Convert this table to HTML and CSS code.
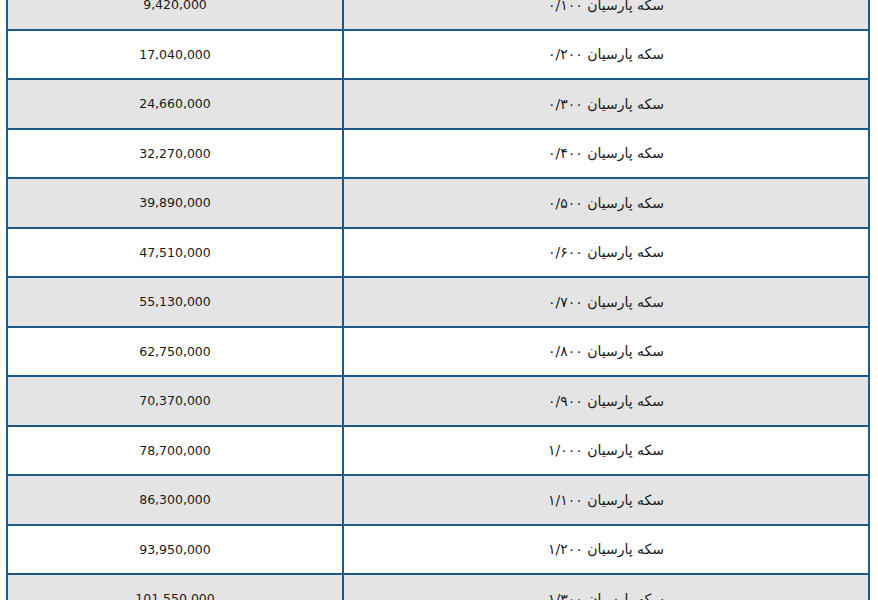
FILE: index.html
```html
<!DOCTYPE html>
<html lang="fa">
<head>
<meta charset="utf-8">
<link rel="stylesheet" href="styles.css">
</head>
<body>
<div class="wrap">
<table class="prices" dir="rtl">
<tbody>
<tr class="odd"><td class="name">سکه پارسیان ۰/۱۰۰</td><td class="price">9,420,000</td></tr>
<tr><td class="name">سکه پارسیان ۰/۲۰۰</td><td class="price">17,040,000</td></tr>
<tr class="odd"><td class="name">سکه پارسیان ۰/۳۰۰</td><td class="price">24,660,000</td></tr>
<tr><td class="name">سکه پارسیان ۰/۴۰۰</td><td class="price">32,270,000</td></tr>
<tr class="odd"><td class="name">سکه پارسیان ۰/۵۰۰</td><td class="price">39,890,000</td></tr>
<tr><td class="name">سکه پارسیان ۰/۶۰۰</td><td class="price">47,510,000</td></tr>
<tr class="odd"><td class="name">سکه پارسیان ۰/۷۰۰</td><td class="price">55,130,000</td></tr>
<tr><td class="name">سکه پارسیان ۰/۸۰۰</td><td class="price">62,750,000</td></tr>
<tr class="odd"><td class="name">سکه پارسیان ۰/۹۰۰</td><td class="price">70,370,000</td></tr>
<tr><td class="name">سکه پارسیان ۱/۰۰۰</td><td class="price">78,700,000</td></tr>
<tr class="odd"><td class="name">سکه پارسیان ۱/۱۰۰</td><td class="price">86,300,000</td></tr>
<tr><td class="name">سکه پارسیان ۱/۲۰۰</td><td class="price">93,950,000</td></tr>
<tr class="odd"><td class="name">سکه پارسیان ۱/۳۰۰</td><td class="price">101,550,000</td></tr>
</tbody>
</table>
</div>
</body>
</html>
```

FILE: styles.css
```css
html, body {
  margin: 0;
  padding: 0;
  background: #ffffff;
  overflow: hidden;
}
.wrap {
  padding-left: 6px;
}
.prices {
  margin-top: -21px;
  border-collapse: collapse;
  width: 864px;
  border: 2px solid #1b5a8b;
  font-family: "DejaVu Sans", sans-serif;
  color: #1a1a1a;
  direction: rtl;
}
.prices td {
  border: 2px solid #1b5a8b;
  height: 47.5px;
  padding: 0;
  text-align: center;
  vertical-align: middle;
}
.prices tr.odd td {
  background: #e4e4e4;
}
.name {
  width: 524px;
  font-size: 14px;
  padding-bottom: 2px;
}
.price {
  font-size: 12.5px;
}
```
